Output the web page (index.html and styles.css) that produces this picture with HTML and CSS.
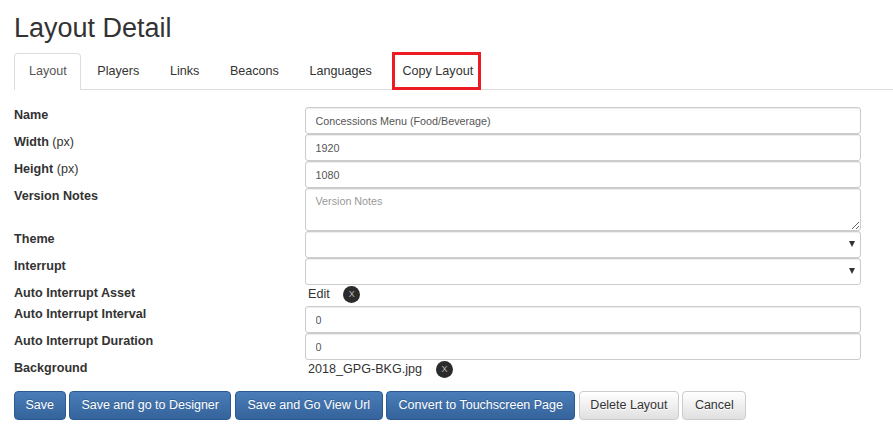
FILE: index.html
```html
<!DOCTYPE html>
<html lang="en">
<head>
<meta charset="utf-8">
<title>Layout Detail</title>
<link rel="stylesheet" href="styles.css">
</head>
<body>
<div class="page">
  <h1 class="title">Layout Detail</h1>
  <ul class="tabs">
    <li class="tab active"><a>Layout</a></li>
    <li class="tab"><a>Players</a></li>
    <li class="tab"><a>Links</a></li>
    <li class="tab"><a>Beacons</a></li>
    <li class="tab"><a>Languages</a></li>
    <li class="tab highlighted"><a>Copy Layout</a></li>
  </ul>
  <form class="form">
    <div class="row"><label class="lbl">Name</label><input class="ctl" value="Concessions Menu (Food/Beverage)"></div>
    <div class="row"><label class="lbl">Width <span class="unit">(px)</span></label><input class="ctl" value="1920"></div>
    <div class="row"><label class="lbl">Height <span class="unit">(px)</span></label><input class="ctl" value="1080"></div>
    <div class="row"><label class="lbl">Version Notes</label><textarea class="ctl area" placeholder="Version Notes"></textarea></div>
    <div class="row"><label class="lbl">Theme</label><div class="ctl select"><span class="caret"></span></div></div>
    <div class="row"><label class="lbl">Interrupt</label><div class="ctl select"><span class="caret"></span></div></div>
    <div class="row plain first"><label class="lbl">Auto Interrupt Asset</label><div class="val"><span>Edit</span><span class="x x-edit">X</span></div></div>
    <div class="row"><label class="lbl">Auto Interrupt Interval</label><input class="ctl" value="0"></div>
    <div class="row"><label class="lbl">Auto Interrupt Duration</label><input class="ctl" value="0"></div>
    <div class="row plain"><label class="lbl">Background</label><div class="val"><span>2018_GPG-BKG.jpg</span><span class="x x-bg">X</span></div></div>
    <div class="actions">
      <button type="button" class="btn primary tight">Save</button>
      <button type="button" class="btn primary">Save and go to Designer</button>
      <button type="button" class="btn primary">Save and Go View Url</button>
      <button type="button" class="btn primary">Convert to Touchscreen Page</button>
      <button type="button" class="btn default tight">Delete Layout</button>
      <button type="button" class="btn default">Cancel</button>
    </div>
  </form>
</div>
</body>
</html>
```
FILE: styles.css
```css
* { box-sizing: border-box; }
html, body { margin: 0; background: #fff; }
body { font-family: "Liberation Sans", Arial, sans-serif; font-size: 14px; line-height: 20px; color: #333; overflow: hidden; }
.page { padding: 0 32px 0 14px; width: 893px; height: 438px; }
.title { margin: 0; padding-top: 13px; height: 53px; font-size: 27px; line-height: 31px; font-weight: 400; }
.tabs { display: flex; list-style: none; margin: 0 -32px 17px 0; padding: 0; height: 37px; border-bottom: 1px solid #ddd; }
.tab { position: relative; height: 37px; padding: 8px 15.3px; font-size: 12.6px; line-height: 20px; }
.tab a { color: #333; }
.tab.active { background: #fff; border: 1px solid #ddd; border-bottom: 0; border-radius: 4px 4px 0 0; width: 67px; margin-right: 1px; padding: 7px 14px; }
.tab.active a { color: #555; }
.highlighted::after { content: ""; position: absolute; box-sizing: border-box; left: 5px; top: -1px; width: 89px; height: 38px; border: 3px solid #ed1c24; }
.row { display: grid; grid-template-columns: 291px 556px; min-height: 27px; }
.lbl { font-weight: 700; font-size: 12.6px; line-height: 16px; }
.unit { font-weight: 400; }
.ctl { display: block; width: 100%; height: 27px; border: 1px solid #ccc; border-radius: 3px; background: #fff; padding: 4px 9.5px; font: 10.75px/17px "Liberation Sans", Arial, sans-serif; color: #555; box-shadow: inset 0 1px 1px rgba(0,0,0,.075); }
.area { height: 43px; resize: vertical; }
.area::placeholder { color: #999; }
.select { position: relative; }
.caret { position: absolute; right: 5px; top: 9px; width: 0; height: 0; border-left: 3px solid transparent; border-right: 3px solid transparent; border-top: 6px solid #333; }
.plain { min-height: 0; }
.first { height: 21px; }
.val { display: flex; align-items: flex-start; padding: 1px 0 0 3px; font-size: 12.6px; line-height: 16px; height: 20px; color: #333; }
.x { display: inline-flex; align-items: center; justify-content: center; width: 17px; height: 17px; border-radius: 50%; background: #2b2b2b; color: #bbb; font-size: 9px; line-height: 1; }
.x-edit { margin-left: 13.5px; }
.x-bg { margin-left: 14px; }
.actions { display: flex; margin-top: 11px; gap: 3.4px; }
.btn { height: 29px; padding: 0 11.5px 2px; border-radius: 4px; font: 12.5px/20px "Liberation Sans", Arial, sans-serif; cursor: pointer; }
.tight { padding-left: 10.5px; padding-right: 10.5px; }
.primary { color: #fff; background: linear-gradient(#4a7db9, #35639b); border: 1px solid #2b5a92; text-shadow: 0 -1px 0 rgba(0,0,0,.2); }
.default { color: #333; background: linear-gradient(#fff, #e0e0e0); border: 1px solid #ccc; text-shadow: 0 1px 0 #fff; }
```
